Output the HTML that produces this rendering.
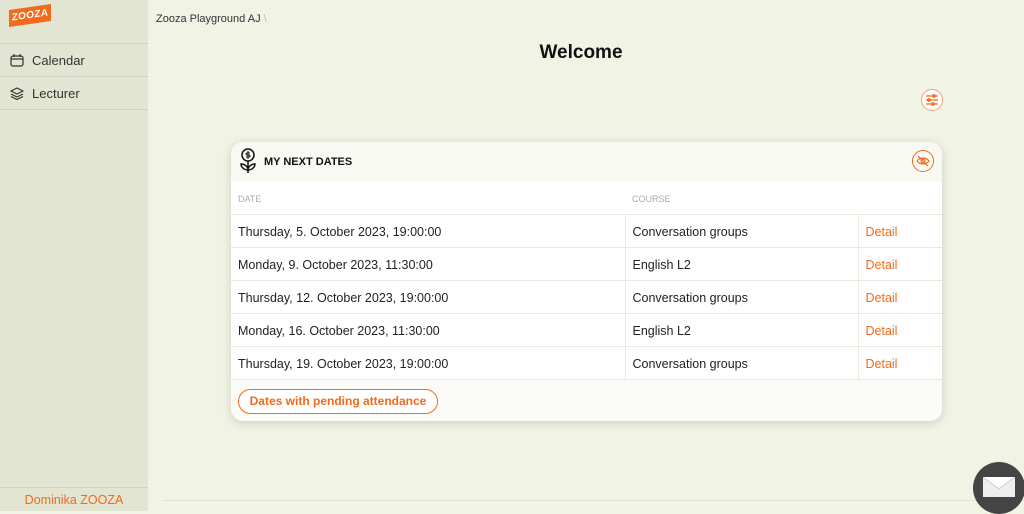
<!DOCTYPE html>
<html><head><meta charset="utf-8"><style>
*{box-sizing:border-box;margin:0;padding:0}
body{width:1024px;height:511px;overflow:hidden;background:#f1f3e5;font-family:"Liberation Sans",sans-serif;position:relative;color:#222}
.sb{position:absolute;left:0;top:0;width:148px;height:511px;background:#e2e5d1}
.logo{position:absolute;left:9px;top:7px;width:42px;height:17px;background:#f26a1b;color:#fff;font-weight:bold;font-size:10px;line-height:17px;text-align:center;letter-spacing:0.3px;transform:skewY(-8deg)}
.nav{position:absolute;left:0;width:148px;height:33px;border-top:1px solid #cfd2bf;font-size:13px;color:#333;padding-left:32px;line-height:34px}
.nav svg{position:absolute;left:10px;top:10px}
.user{position:absolute;left:0;top:487px;width:148px;height:24px;border-top:1px solid #cfd2bf;color:#f26a1b;font-size:12.5px;text-align:center;line-height:24px}
.bc{position:absolute;left:156px;top:13px;font-size:11px;color:#333}
h1{position:absolute;left:0;width:1162px;text-align:center;top:42px;font-size:19px;font-weight:bold;color:#111}
.circ{position:absolute;width:22px;height:22px;border:1px solid #f5a070;border-radius:50%;background:#fff}
.card{position:absolute;left:231px;top:142px;width:711px;height:279px;background:#fbfbf7;border-radius:12px;box-shadow:0 2px 10px rgba(0,0,0,.15);overflow:hidden}
.hd{height:40px;background:#f8f9f2;position:relative}
.hd b{position:absolute;left:33px;top:14px;font-size:11px;color:#111}
table{border-collapse:collapse;width:711px;background:#fff;font-size:12.5px}
td{height:33px;border-top:1px solid #e8e9df;padding-left:7px;padding-top:2px}
td+td{border-left:1px solid #e8e9df}
tr.h td{height:32px;font-size:9px;color:#aaa;border-top:none;border-left:none}
.o{color:#f26a1b}
.btn{position:absolute;left:7px;top:247px;width:200px;height:25px;border:1px solid #f26a1b;border-radius:13px;color:#f26a1b;font-size:12px;font-weight:bold;text-align:center;line-height:23px;background:#fff}
.line{position:absolute;left:163px;right:0;top:500px;border-top:1px solid #e2e4d6}
.mail{position:absolute;left:973px;top:462px;width:52px;height:52px;border-radius:50%;background:#444}
</style></head><body>
<div class="sb">
<div class="logo">ZOOZA</div>
<div class="nav" style="top:43px"><svg width="14" height="13" viewBox="0 0 14 13" fill="none" stroke="#333" stroke-width="1.2"><rect x="1" y="2" width="12" height="10" rx="2"/><path d="M1 5h12M4 0v3M10 0v3"/></svg>Calendar</div>
<div class="nav" style="top:76px"><svg width="14" height="13" viewBox="0 0 14 13" fill="none" stroke="#333" stroke-width="1.2"><path d="M7 1l6 3-6 3-6-3z M1 7l6 3 6-3 M1 9.5l6 3 6-3"/></svg>Lecturer</div>
<div class="nav" style="top:109px;height:0"></div>
<div class="user">Dominika ZOOZA</div>
</div>
<div class="bc">Zooza Playground AJ <span style="color:#bbb">\</span></div>
<h1>Welcome</h1>
<div class="circ" style="left:921px;top:89px"><svg width="20" height="20" viewBox="0 0 20 20" stroke="#f26a1b" fill="none" stroke-width="1.2"><path d="M4 6h12M4 10h12M4 14h12"/><circle cx="12" cy="6" r="1.3"/><circle cx="7" cy="10" r="1.3"/><circle cx="11" cy="14" r="1.3"/></svg></div>
<div class="card">
<div class="hd"><svg style="position:absolute;left:7px;top:6px" width="20" height="26" viewBox="0 0 20 26" fill="none" stroke="#111" stroke-width="1.5"><circle cx="10" cy="7" r="6"/><path d="M10 13v12M10 22c-4 0-7-3-7-6 4 0 7 3 7 6zM10 22c4 0 7-3 7-6-4 0-7 3-7 6"/><path d="M12 5h-3a1 1 0 000 2h2a1 1 0 010 2H8M10 3v8" stroke-width="1"/></svg><b>MY NEXT DATES</b>
<div class="circ" style="left:681px;top:8px;border-color:#f26a1b"><svg width="20" height="20" viewBox="0 0 20 20" stroke="#f26a1b" fill="none" stroke-width="1.2"><path d="M4 10c3-4 9-4 12 0-3 4-9 4-12 0z"/><circle cx="10" cy="10" r="2"/><path d="M5 5l10 10"/></svg></div></div>
<table>
<tr class="h"><td style="width:394px">DATE</td><td style="width:233px">COURSE</td><td></td></tr>
<tr><td>Thursday, 5. October 2023, 19:00:00</td><td>Conversation groups</td><td class="o">Detail</td></tr>
<tr><td>Monday, 9. October 2023, 11:30:00</td><td>English L2</td><td class="o">Detail</td></tr>
<tr><td>Thursday, 12. October 2023, 19:00:00</td><td>Conversation groups</td><td class="o">Detail</td></tr>
<tr><td>Monday, 16. October 2023, 11:30:00</td><td>English L2</td><td class="o">Detail</td></tr>
<tr><td>Thursday, 19. October 2023, 19:00:00</td><td>Conversation groups</td><td class="o">Detail</td></tr>
</table>
<div style="border-top:1px solid #e8e9df"></div>
<div class="btn">Dates with pending attendance</div>
</div>
<div class="line"></div>
<div class="mail"><svg style="position:absolute;left:10px;top:15px" width="32" height="20" viewBox="0 0 32 20"><rect width="32" height="20" fill="#eee"/><path d="M0 0l16 12L32 0" fill="#fff" stroke="#ccc"/></svg></div>
</body></html>
